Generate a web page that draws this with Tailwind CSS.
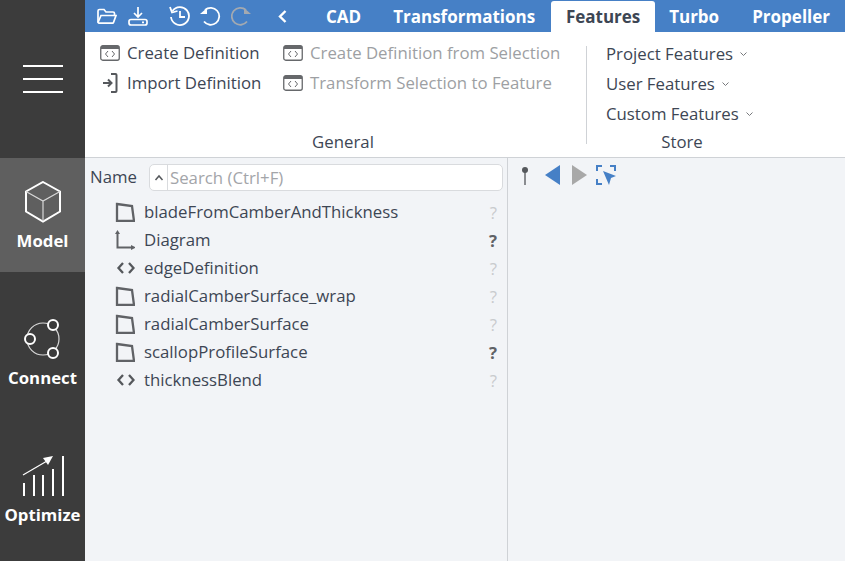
<!DOCTYPE html>
<html>

<head>
    <title>Features</title>
    <meta charset="utf-8">
    <script src="https://cdn.jsdelivr.net/npm/@tailwindcss/browser@4"></script>
</head>

<body class="w-[845px] h-[561px] overflow-hidden flex bg-[#f2f4f7] text-[#3d4654] font-['Open_Sans',sans-serif] text-[16.8px] leading-none">
    <!-- sidebar -->
    <nav class="w-[85px] h-full shrink-0 bg-[#3c3c3c] flex flex-col items-center text-white font-bold">
        <div class="h-[158px] w-full flex items-center justify-center">
            <svg width="40" height="28" viewBox="0 0 40 28" class="mb-[1px]" fill="none" stroke="#fff" stroke-width="2"><path d="M0 1H40M0 14H40M0 27H40"/></svg>
        </div>
        <div class="h-[114px] w-full bg-[#5f5f5f] flex flex-col items-center pt-[23px]">
            <svg width="38" height="42" viewBox="0 0 38 42" fill="none" stroke="#fff" stroke-width="1.6"><path d="M19 1 36 10.500V30.500L19 40.500 2 30.500V10.500Z" stroke-width="2"/><path d="M2 10.500 19 20 36 10.500M19 20V40" stroke="#d8d8d8" stroke-width="1.200"/></svg>
            <span class="mt-[7px] leading-[22px]">Model</span>
        </div>
        <div class="h-[136px] w-full flex flex-col items-center pt-[46px]">
            <svg width="42" height="42" viewBox="0 0 42 42" fill="none" stroke="#fff"><circle cx="21" cy="21" r="16" stroke="#d8d8d8" stroke-width="1.200"/><circle cx="31" cy="7" r="5" fill="#3c3c3c" stroke-width="2"/><circle cx="8" cy="21" r="5" fill="#3c3c3c" stroke-width="2"/><circle cx="31" cy="35" r="5" fill="#3c3c3c" stroke-width="2"/></svg>
            <span class="mt-[7px] leading-[22px]">Connect</span>
        </div>
        <div class="w-full flex flex-col items-center pt-[47px]">
            <svg width="42" height="42" viewBox="0 0 42 42" fill="none" stroke="#fff" stroke-width="2"><path d="M2 41V28M12 41V20M21 41V20M31 41V14M41 41V1"/><path d="M1 20 25 6" stroke-width="1.200"/><path d="M31 1 21 3 26 10Z" fill="#fff" stroke="none"/></svg>
            <span class="mt-[7px] leading-[22px]">Optimize</span>
        </div>
    </nav>

    <main class="flex-1 min-w-0 flex flex-col">
        <!-- top bar -->
        <header class="h-[32px] shrink-0 bg-[#4680c6] flex items-center text-white font-bold text-[17px] overflow-hidden">
            <svg class="ml-[12px] shrink-0" width="20" height="17" viewBox="0 0 20 17" fill="none" stroke="#fff" stroke-width="1.700"><path d="M1 14V3a1.500 1.500 0 0 1 1.500-1.500H7L9 4h7a1.500 1.500 0 0 1 1.500 1.500V7"/><path d="M1 14.500 4 7.500H19L16.500 14.500a1 1 0 0 1-1 .7H2Z"/></svg>
            <svg class="ml-[11px] shrink-0" width="20" height="19" viewBox="0 0 20 19" fill="none" stroke="#fff" stroke-width="1.700"><path d="M10 0V9M6 6l4 4 4-4"/><rect x="1" y="12.500" width="18" height="5.500" rx="2"/><path d="M14 15.300h2" /></svg>
            <svg class="ml-[21px] shrink-0" width="21" height="20" viewBox="0 0 21 20" fill="none" stroke="#fff" stroke-width="1.800"><path d="M3.500 5A9 9 0 1 1 2 11"/><path d="M1 1 3 6.500 8.500 5" /><path d="M11 5V11H16" /></svg>
            <svg class="ml-[10px] shrink-0" width="21" height="20" viewBox="0 0 21 20" fill="none" stroke="#fff" stroke-width="1.800"><path d="M5 4A8.500 8.500 0 1 1 4 15.500"/><path d="M0 6H7V0Z" fill="#fff" stroke="none" transform="translate(0 2)"/></svg>
            <svg class="ml-[10px] shrink-0" width="21" height="20" viewBox="0 0 21 20" fill="none" stroke="#a3a9b1" stroke-width="1.800"><path d="M15 4A8.500 8.500 0 1 0 16 15.500"/><path d="M20 6H13V0Z" fill="#a3a9b1" stroke="none" transform="translate(0 2)"/></svg>
            <svg class="ml-[26px] shrink-0" width="9" height="13" viewBox="0 0 9 13" fill="none" stroke="#fff" stroke-width="2.400"><path d="M7.500 1 2 6.500l5.500 5.500"/></svg>
            <span class="ml-[39px]">CAD</span>
            <span class="ml-[32px]">Transformations</span>
            <span class="ml-[16px] h-[31px] mt-[1px] w-[104px] shrink-0 bg-white rounded-t-[3px] text-[#3d4654] flex items-center justify-center">Features</span>
            <span class="ml-[14px]">Turbo</span>
            <span class="ml-[33px] whitespace-nowrap">Propeller</span>
        </header>

        <!-- ribbon -->
        <section class="h-[126px] shrink-0 bg-white border-b border-[#cfd2d6] flex">
            <div class="w-[501px] shrink-0 flex flex-col">
                <div class="flex-1 flex pt-[6px] pl-[15px]">
                    <div class="w-[183px] shrink-0">
                        <div class="h-[30px] flex items-center gap-[7px]">
                            <svg width="20" height="16" viewBox="0 0 20 16" fill="none" stroke="#66686b"><rect x=".75" y=".75" width="18.500" height="14.500" rx="2" stroke-width="1.300"/><path d="M1 2.500H19" stroke-width="3"/><path d="M8 6 5.500 9 8 12M12 6 14.500 9 12 12" stroke-width="1"/></svg>
                            <span class="whitespace-nowrap">Create Definition</span>
                        </div>
                        <div class="h-[30px] flex items-center gap-[7px]">
                            <svg width="20" height="20" viewBox="0 0 20 20" fill="none" stroke="#55585c" stroke-width="2"><path d="M3 10H11M8 6.500 11.500 10 8 13.500"/><path d="M11 1H15.500A1 1 0 0 1 16.500 2V18A1 1 0 0 1 15.500 19H11"/></svg>
                            <span class="whitespace-nowrap">Import Definition</span>
                        </div>
                    </div>
                    <div class="text-[#9d9fa3]">
                        <div class="h-[30px] flex items-center gap-[7px]">
                            <svg width="20" height="16" viewBox="0 0 20 16" fill="none" stroke="#66686b"><rect x=".75" y=".75" width="18.500" height="14.500" rx="2" stroke-width="1.300"/><path d="M1 2.500H19" stroke-width="3"/><path d="M8 6 5.500 9 8 12M12 6 14.500 9 12 12" stroke-width="1"/></svg>
                            <span class="whitespace-nowrap">Create Definition from Selection</span>
                        </div>
                        <div class="h-[30px] flex items-center gap-[7px]">
                            <svg width="20" height="16" viewBox="0 0 20 16" fill="none" stroke="#66686b"><rect x=".75" y=".75" width="18.500" height="14.500" rx="2" stroke-width="1.300"/><path d="M1 2.500H19" stroke-width="3"/><path d="M8 6 5.500 9 8 12M12 6 14.500 9 12 12" stroke-width="1"/></svg>
                            <span class="whitespace-nowrap">Transform Selection to Feature</span>
                        </div>
                    </div>
                </div>
                <div class="h-[26px] pl-[15px] text-center leading-[22px]">General</div>
            </div>
            <div class="w-[192px] flex flex-col relative">
                <div class="absolute left-0 top-[14px] h-[98px] w-px bg-[#cfd2d6]"></div>
                <div class="flex-1 pt-[7px] pl-[20px]">
                    <div class="h-[30px] flex items-center gap-[7px]"><span>Project Features</span><svg width="7" height="5" viewBox="0 0 7 5" fill="none" stroke="#77797c"><path d="M.5 .5 3.500 3.500 6.500 .5"/></svg></div>
                    <div class="h-[30px] flex items-center gap-[7px]"><span>User Features</span><svg width="7" height="5" viewBox="0 0 7 5" fill="none" stroke="#77797c"><path d="M.5 .5 3.500 3.500 6.500 .5"/></svg></div>
                    <div class="h-[30px] flex items-center gap-[7px]"><span>Custom Features</span><svg width="7" height="5" viewBox="0 0 7 5" fill="none" stroke="#77797c"><path d="M.5 .5 3.500 3.500 6.500 .5"/></svg></div>
                </div>
                <div class="h-[26px] text-center leading-[22px]">Store</div>
            </div>
        </section>

        <!-- panes -->
        <section class="flex-1 min-h-0 flex">
            <div class="w-[423px] shrink-0 border-r border-[#cfd2d6]">
                <div class="h-[40px] flex items-center pl-[5px] pr-[4px]">
                    <span class="w-[59px] shrink-0 mb-[1px]">Name</span>
                    <div class="flex-1 h-[27px] mb-[1px] bg-white border border-[#d9dbde] rounded-[5px] flex items-center">
                        <span class="w-[18px] h-full border-r border-[#d9dbde] flex items-center justify-center shrink-0">
                            <svg width="10" height="7" viewBox="0 0 10 7" fill="none" stroke="#55585c" stroke-width="1.500"><path d="M1.500 6 5 2 8.500 6"/></svg>
                        </span>
                        <span class="pl-[2px] mt-[2px] text-[#a3a5a9]">Search (Ctrl+F)</span>
                    </div>
                </div>
                <ul class="list-none">
                    <li class="h-[28px] flex items-center pl-[30px] pr-[10px]">
                        <svg class="w-[20px] shrink-0" width="20" height="20" viewBox="0 0 20 20" fill="none" stroke="#606266" stroke-width="2.300"><path d="M2 2 17 4 19 19H2Z"/></svg>
                        <span class="ml-[9px] flex-1">bladeFromCamberAndThickness</span><span class="mt-[2px] text-[#c9cbce]">?</span>
                    </li>
                    <li class="h-[28px] flex items-center pl-[30px] pr-[10px]">
                        <svg class="w-[20px] shrink-0" width="20" height="20" viewBox="0 0 20 20" fill="none" stroke="#606266" stroke-width="2"><path d="M2.500 3V17.500H18"/><path d="M2.500 0 0 4H5ZM21 17.500 16 15V20Z" fill="#606266" stroke="none"/></svg>
                        <span class="ml-[9px] flex-1">Diagram</span><span class="mt-[2px] text-[#606266] font-bold">?</span>
                    </li>
                    <li class="h-[28px] flex items-center pl-[30px] pr-[10px]">
                        <svg class="w-[20px] shrink-0" width="20" height="12" viewBox="0 0 20 12" fill="none" stroke="#55585c" stroke-width="2.300"><path d="M8 1 3.500 6 8 11M14 1 18.500 6 14 11"/></svg>
                        <span class="ml-[9px] flex-1">edgeDefinition</span><span class="mt-[2px] text-[#c9cbce]">?</span>
                    </li>
                    <li class="h-[28px] flex items-center pl-[30px] pr-[10px]">
                        <svg class="w-[20px] shrink-0" width="20" height="20" viewBox="0 0 20 20" fill="none" stroke="#606266" stroke-width="2.300"><path d="M2 2 17 4 19 19H2Z"/></svg>
                        <span class="ml-[9px] flex-1">radialCamberSurface_wrap</span><span class="mt-[2px] text-[#c9cbce]">?</span>
                    </li>
                    <li class="h-[28px] flex items-center pl-[30px] pr-[10px]">
                        <svg class="w-[20px] shrink-0" width="20" height="20" viewBox="0 0 20 20" fill="none" stroke="#606266" stroke-width="2.300"><path d="M2 2 17 4 19 19H2Z"/></svg>
                        <span class="ml-[9px] flex-1">radialCamberSurface</span><span class="mt-[2px] text-[#c9cbce]">?</span>
                    </li>
                    <li class="h-[28px] flex items-center pl-[30px] pr-[10px]">
                        <svg class="w-[20px] shrink-0" width="20" height="20" viewBox="0 0 20 20" fill="none" stroke="#606266" stroke-width="2.300"><path d="M2 2 17 4 19 19H2Z"/></svg>
                        <span class="ml-[9px] flex-1">scallopProfileSurface</span><span class="mt-[2px] text-[#606266] font-bold">?</span>
                    </li>
                    <li class="h-[28px] flex items-center pl-[30px] pr-[10px]">
                        <svg class="w-[20px] shrink-0" width="20" height="12" viewBox="0 0 20 12" fill="none" stroke="#55585c" stroke-width="2.300"><path d="M8 1 3.500 6 8 11M14 1 18.500 6 14 11"/></svg>
                        <span class="ml-[9px] flex-1">thicknessBlend</span><span class="mt-[2px] text-[#c9cbce]">?</span>
                    </li>
                </ul>
            </div>
            <div class="flex-1 flex items-start pl-[14px] pt-[7px]">
                <svg class="mt-[2px]" width="6" height="18" viewBox="0 0 6 18"><path d="M3 4V18" stroke="#8a8c90" stroke-width="2"/><circle cx="3" cy="3" r="3" fill="#55585c"/></svg>
                <svg class="ml-[17px]" width="15" height="20" viewBox="0 0 15 20"><path d="M15 0V20L0 10Z" fill="#4680c6"/></svg>
                <svg class="ml-[12px]" width="15" height="20" viewBox="0 0 15 20"><path d="M0 0V20L15 10Z" fill="#a8a8a8"/></svg>
                <svg class="ml-[9px]" width="20" height="20" viewBox="0 0 20 20" fill="none" stroke="#4680c6" stroke-width="2"><path d="M1 6V1H6M14 1H19V6M1 14V19H6"/><path d="M7 6 20 11 15 13 13 20Z" fill="#4680c6" stroke="none"/></svg>
            </div>
        </section>
    </main>
</body>

</html>
